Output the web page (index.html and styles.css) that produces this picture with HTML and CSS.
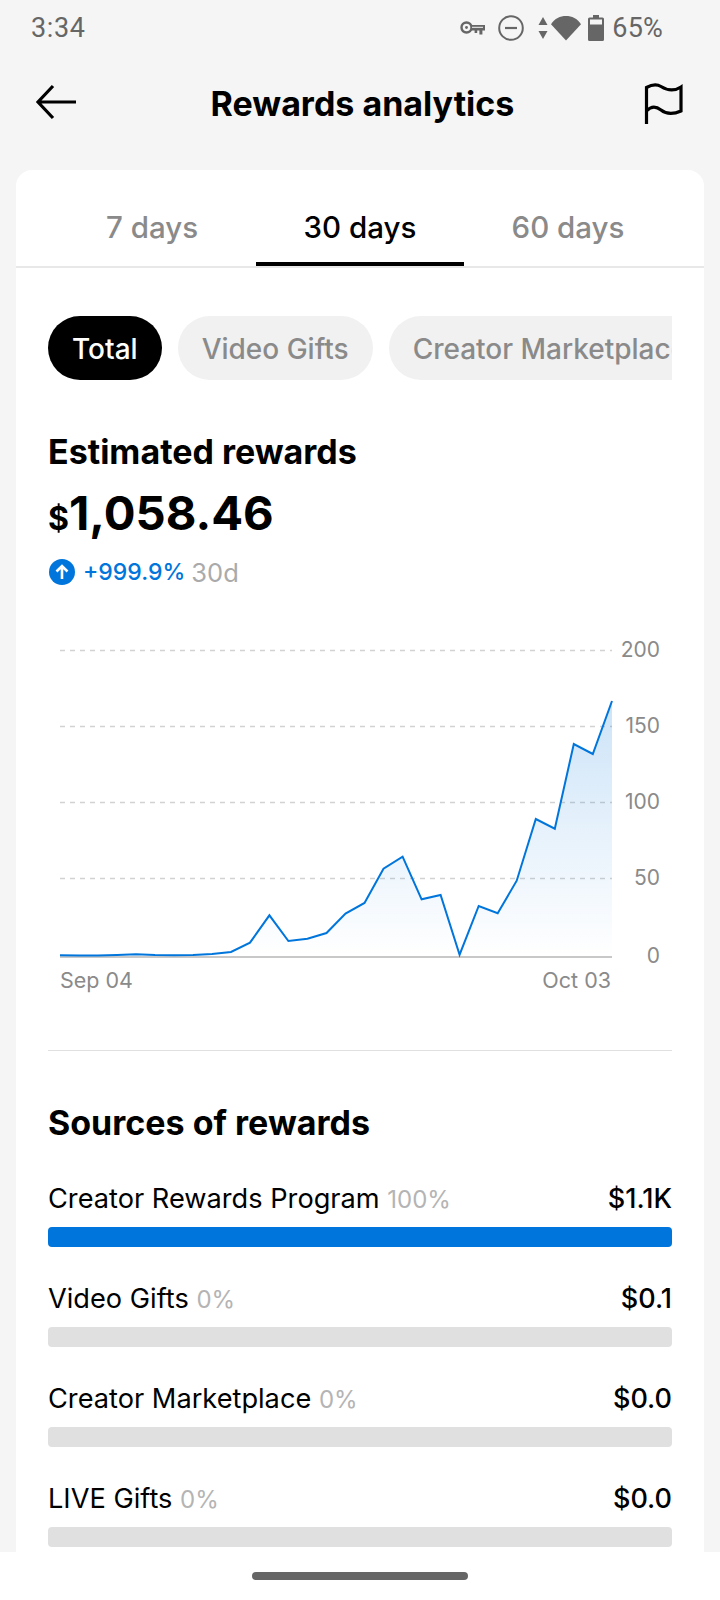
FILE: index.html
```html
<!DOCTYPE html>
<html lang="en">
<head>
<meta charset="utf-8">
<title>Rewards analytics</title>
<link rel="stylesheet" href="styles.css">
</head>
<body>
<div class="phone">
  <div class="status">
    <span class="time">3:34</span>
    <div class="status-right">
      <svg class="ic-key" width="26" height="16" viewBox="0 0 26 16"><circle cx="6.5" cy="7.5" r="5" fill="none" stroke="#666" stroke-width="2.4"/><circle cx="6.5" cy="7.5" r="1.4" fill="#666"/><path d="M11 5h14v5.500h-2.600v4h-3v-4h-2.200v2.400h-2.600v-2.400H11z" fill="#666"/><path d="M12 7.300h11" stroke="#f5f5f5" stroke-width="1"/></svg>
      <svg class="ic-dnd" width="26" height="26" viewBox="0 0 26 26"><circle cx="13" cy="13" r="11.800" fill="none" stroke="#666" stroke-width="2"/><path d="M7 13h12" stroke="#666" stroke-width="2.200"/></svg>
      <svg class="ic-arrows" width="10" height="22" viewBox="0 0 10 22"><path d="M5 0l4.500 8H.5zM5 22L.5 14h9z" fill="#666"/></svg>
      <svg class="ic-wifi" width="30" height="26" viewBox="0 0 30 26"><path d="M15 25.500L0 9.300C3.800 3.500 9 1 15 1s11.200 2.500 15 8.300z" fill="#666"/></svg>
      <svg class="ic-batt" width="16" height="26" viewBox="0 0 16 26"><path d="M5 0h6v2.500h3.500A1.500 1.500 0 0 1 16 4v20.500a1.500 1.500 0 0 1-1.500 1.500h-13A1.500 1.500 0 0 1 0 24.500V4a1.500 1.500 0 0 1 1.500-1.500H5z" fill="#666"/><rect x="2" y="4.500" width="12" height="5" fill="#f5f5f5"/></svg>
      <span class="pct">65%</span>
    </div>
  </div>

  <header class="head">
    <svg class="back" width="42" height="36" viewBox="0 0 42 36"><path d="M18 2L3 18l15 16M3 18h38" fill="none" stroke="#000" stroke-width="3.200"/></svg>
    <h1 class="title">Rewards analytics</h1>
    <svg class="flag" width="40" height="42" viewBox="0 0 40 42"><path d="M2.500 41V4.500C7 2 13 1 17 3.500S28 10 37 4v24c-9 4-15 3-20-1S7 23 2.500 28" fill="none" stroke="#000" stroke-width="3.200"/></svg>
  </header>

  <main class="card">
    <nav class="tabs">
      <span class="tab">7 days</span>
      <span class="tab tab-on">30 days</span>
      <span class="tab">60 days</span>
    </nav>

    <div class="body">
      <div class="pills">
        <span class="pill pill-on">Total</span>
        <span class="pill">Video Gifts</span>
        <span class="pill">Creator Marketplace</span>
      </div>

      <h2 class="h-est">Estimated rewards</h2>
      <div class="amount"><span class="cur">$</span>1,058.46</div>
      <div class="delta">
        <svg width="26" height="26" viewBox="0 0 26 26"><circle cx="13" cy="13" r="13" fill="#0075db"/><path d="M13 20V7M7.500 12.500L13 7l5.500 5.500" fill="none" stroke="#fff" stroke-width="2.600"/></svg>
        <span class="delta-val">+999.9%</span>
        <span class="delta-per">30d</span>
      </div>

      <svg class="chart" width="624" height="370" viewBox="48 630 624 370">
        <defs>
          <linearGradient id="fillg" x1="0" y1="701" x2="0" y2="957" gradientUnits="userSpaceOnUse">
            <stop offset="0" stop-color="#0075db" stop-opacity=".2"/>
            <stop offset="1" stop-color="#0075db" stop-opacity="0"/>
          </linearGradient>
        </defs>
        <g class="grid">
          <line x1="60" x2="612" y1="650.500" y2="650.500"/>
          <line x1="60" x2="612" y1="726.500" y2="726.500"/>
          <line x1="60" x2="612" y1="802.500" y2="802.500"/>
          <line x1="60" x2="612" y1="878.500" y2="878.500"/>
        </g>
        <line class="base" x1="60" x2="612" y1="957" y2="957"/>
        <path fill="url(#fillg)" d="M60 955.300L79 955.400 98 955.600 117 955 136 954.200 155 955 174 955.200 193 955 212 954 231 952 250 942.700 269.400 915.300 288.400 941 307.400 938.700 326.500 933 345.500 913.500 364.500 903 383.500 868.700 402.600 856.700 421.600 899.300 440.600 895 459.600 954.700 478.700 906 497.700 913.300 516.700 880.700 535.800 819 554.800 828.700 573.800 744 592.800 754 612 701V956H60z"/>
        <path class="line" d="M60 955.300L79 955.400 98 955.600 117 955 136 954.200 155 955 174 955.200 193 955 212 954 231 952 250 942.700 269.400 915.300 288.400 941 307.400 938.700 326.500 933 345.500 913.500 364.500 903 383.500 868.700 402.600 856.700 421.600 899.300 440.600 895 459.600 954.700 478.700 906 497.700 913.300 516.700 880.700 535.800 819 554.800 828.700 573.800 744 592.800 754 612 701"/>
        <g class="ylab">
          <text x="660" y="657">200</text>
          <text x="660" y="733">150</text>
          <text x="660" y="809">100</text>
          <text x="660" y="885">50</text>
          <text x="660" y="963">0</text>
        </g>
        <text class="xlab" x="60" y="988">Sep 04</text>
        <text class="xlab xlab-end" x="611" y="988">Oct 03</text>
      </svg>

      <div class="divider"></div>

      <h2 class="h-src">Sources of rewards</h2>
      <div class="rows">
        <div class="row">
          <div class="row-top"><span class="row-name">Creator Rewards Program <span class="row-pct">100%</span></span><span class="row-val">$1.1K</span></div>
          <div class="bar bar-on"></div>
        </div>
        <div class="row">
          <div class="row-top"><span class="row-name">Video Gifts <span class="row-pct">0%</span></span><span class="row-val">$0.1</span></div>
          <div class="bar"></div>
        </div>
        <div class="row">
          <div class="row-top"><span class="row-name">Creator Marketplace <span class="row-pct">0%</span></span><span class="row-val">$0.0</span></div>
          <div class="bar"></div>
        </div>
        <div class="row">
          <div class="row-top"><span class="row-name">LIVE Gifts <span class="row-pct">0%</span></span><span class="row-val">$0.0</span></div>
          <div class="bar"></div>
        </div>
      </div>
    </div>
  </main>

  <div class="navbar"><span class="handle"></span></div>
</div>
</body>
</html>
```
FILE: styles.css
```css
* { box-sizing: border-box; }
html, body { margin: 0; padding: 0; }
body { background: #f5f5f5; font-family: Inter, "Noto Sans", sans-serif; color: #000; }
.phone { width: 720px; height: 1600px; display: flex; flex-direction: column; overflow: hidden; }

.status { height: 54px; flex: none; display: flex; justify-content: space-between; align-items: center; padding: 1px 57px 0 31px; font-family: Roboto, sans-serif; color: #666; font-size: 27px; }
.time { letter-spacing: .6px; }
.status-right { display: flex; align-items: center; }
.ic-key { margin-right: 12px; }
.ic-dnd { margin-right: 14px; }
.ic-arrows { margin-right: 3px; }
.ic-wifi { margin-right: 7px; }
.ic-batt { margin-right: 8px; }
.pct { letter-spacing: .2px; font-size: 27px; }

.head { height: 116px; flex: none; display: flex; justify-content: space-between; align-items: center; padding: 0 36px 20px 35px; }
.title { margin: 4px 0 0 4px; font-size: 34px; font-weight: 700; line-height: 40px; }
.flag { margin-top: 4px; }

.card { flex: 1; min-height: 0; margin: 0 16px; background: #fff; border-radius: 16px 16px 0 0; overflow: hidden; }
.tabs { height: 98px; padding: 0 32px; display: grid; grid-template-columns: repeat(3, 1fr); border-bottom: 2px solid #e8e8e8; }
.tab { display: flex; align-items: center; justify-content: center; height: 96px; padding-top: 18px; font-size: 29.500px; font-weight: 500; color: #8a8a8a; }
.tab-on { color: #000; border-bottom: 4px solid #000; padding-top: 22px; }

.body { padding: 48px 32px 0; }
.pills { display: flex; gap: 16px; overflow: hidden; }
.pill { flex: none; height: 64px; padding: 0 24px; border-radius: 32px; background: #f1f1f1; color: #8a8a8a; font-size: 28px; font-weight: 500; line-height: 66px; white-space: nowrap; }
.pill-on { background: #000; color: #fff; }

.h-est { margin: 52px 0 0; font-size: 34px; font-weight: 700; line-height: 40px; }
.amount { margin-top: 11px; font-size: 47.200px; font-weight: 700; line-height: 60px; }
.cur { font-size: 32px; }
.delta { margin-top: 5px; display: flex; align-items: center; height: 36px; }
.delta svg { margin: 0 8px 0 1px; }
.delta-val { color: #0075db; font-size: 23px; font-weight: 500; margin-right: 6px; }
.delta-per { color: #aaa; font-size: 25.500px; }

.chart { display: block; margin-top: 40px; }
.grid line { stroke: #d2d2d2; stroke-width: 1.500; stroke-dasharray: 5 5; }
.base { stroke: #c8c8c8; stroke-width: 2; }
.line { fill: none; stroke: #0075db; stroke-width: 2; }
.ylab text { font-family: Inter, sans-serif; font-size: 21px; fill: #8a8a8a; text-anchor: end; }
.xlab { font-family: Inter, sans-serif; font-size: 21.500px; fill: #8a8a8a; }
.xlab-end { text-anchor: end; }

.divider { height: 1px; background: #e0e0e0; margin-top: 50px; }
.h-src { margin: 52px 0 0; font-size: 34px; font-weight: 700; line-height: 40px; }
.rows { margin-top: 35px; display: flex; flex-direction: column; gap: 31px; }
.row-top { display: flex; justify-content: space-between; align-items: center; height: 40px; }
.row-name { font-size: 27.200px; }
.row-pct { font-size: 24px; color: #b4b4b4; }
.row-val { font-size: 27px; font-weight: 500; }
.bar { height: 20px; margin-top: 9px; border-radius: 4px; background: #e0e0e0; }
.bar-on { background: #0075db; }

.navbar { height: 48px; flex: none; background: #fff; display: flex; justify-content: center; padding-top: 20px; }
.handle { width: 216px; height: 8px; border-radius: 4px; background: #666; }
```
